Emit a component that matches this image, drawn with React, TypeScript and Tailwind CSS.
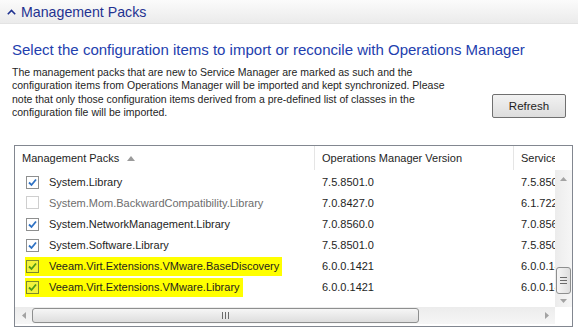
const rows = [
  { name: "System.Library", om: "7.5.8501.0", sm: "7.5.8501.0", checked: true },
  { name: "System.Mom.BackwardCompatibility.Library", om: "7.0.8427.0", sm: "6.1.7221.0", checked: false, disabled: true },
  { name: "System.NetworkManagement.Library", om: "7.0.8560.0", sm: "7.0.8560.0", checked: true },
  { name: "System.Software.Library", om: "7.5.8501.0", sm: "7.5.8501.0", checked: true },
  { name: "Veeam.Virt.Extensions.VMware.BaseDiscovery", om: "6.0.0.1421", sm: "6.0.0.1421", checked: true, hl: true },
  { name: "Veeam.Virt.Extensions.VMware.Library", om: "6.0.0.1421", sm: "6.0.0.1421", checked: true, hl: true },
];

function Checkbox({ checked, disabled, hl }: { checked: boolean; disabled?: boolean; hl?: boolean }) {
  const box = hl
    ? "border-[#7d8a2c] bg-[#f2f23c]"
    : disabled
      ? "border-[#cfcfcf] bg-white"
      : "border-[#8e8f8f] bg-white";
  return (
    <span className={`flex items-center justify-center w-[13px] h-[13px] border ${box}`}>
      {checked && (
        <svg width="9" height="9" viewBox="0 0 9 9">
          <path d="M1 4.5 L3.5 7 L8 1.5" fill="none" stroke={hl ? "#4f9a18" : "#2f72c4"} strokeWidth="1.8" />
        </svg>
      )}
    </span>
  );
}

function Tri({ dir }: { dir: "up" | "down" | "left" | "right" }) {
  const pts = {
    up: "0,4 7,4 3.5,0",
    down: "0,0 7,0 3.5,4",
    left: "4,0 4,7 0,3.5",
    right: "0,0 0,7 4,3.5",
  }[dir];
  const w = dir === "up" || dir === "down" ? 7 : 4;
  const h = dir === "up" || dir === "down" ? 4 : 7;
  return (
    <svg width={w} height={h} viewBox={`0 0 ${w} ${h}`}>
      <polygon points={pts} fill="#a3a3a3" />
    </svg>
  );
}

export default function App() {
  return (
    <div className="w-[578px] h-[331px] bg-white overflow-hidden font-['Liberation_Sans',sans-serif] text-[#1e1e1e]">
      <div className="h-6 flex items-center gap-[5px] pl-[7px] bg-gradient-to-b from-[#fbfbfb] to-[#ebebeb] border-b border-[#e3e3e3]">
        <svg width="9" height="6" viewBox="0 0 9 6" className="mt-[1px]">
          <polyline points="0.8,5.2 4.5,1.5 8.2,5.2" fill="none" stroke="#1f3291" strokeWidth="1.6" />
        </svg>
        <span className="text-[14.2px] leading-5 text-[#1f3291]">Management Packs</span>
      </div>

      <div className="pl-3 pt-4">
        <h2 className="text-[15px] leading-5 whitespace-nowrap text-[#2340ae]">
          Select the configuration items to import or reconcile with Operations Manager
        </h2>
        <div className="flex items-end mt-[6px]">
          <p className="text-[10.5px] leading-[13.3px] whitespace-nowrap">
            The management packs that are new to Service Manager are marked as such and the
            <br />
            configuration items from Operations Manager will be imported and kept synchronized. Please
            <br />
            note that only those configuration items derived from a pre-defined list of classes in the
            <br />
            configuration file will be imported.
          </p>
          <button className="ml-auto mr-3 mb-px w-[74px] h-6 rounded-[2px] border border-[#707070] bg-gradient-to-b from-[#f2f2f2] to-[#dddddd] text-[11.5px] text-[#1e1e1e]">
            Refresh
          </button>
        </div>
      </div>

      <div className="ml-[14px] mt-[26px] w-[559px] h-[182px] border border-[#828790] flex flex-col text-[11px]">
        <div className="h-6 flex shrink-0 w-[540px] overflow-hidden whitespace-nowrap">
          <div className="w-[300px] shrink-0 flex items-center gap-2 pl-[7px] border-r border-[#e5e5e5]">
            <span>Management Packs</span>
            <svg width="8" height="5" viewBox="0 0 8 5">
              <polygon points="0,5 8,5 4,0" fill="#9b9b9b" />
            </svg>
          </div>
          <div className="w-[199px] shrink-0 flex items-center pl-[7px] border-r border-[#e5e5e5]">
            Operations Manager Version
          </div>
          <div className="flex-1 flex items-center pl-[7px]">Service Manager Version</div>
        </div>

        <div className="flex flex-1 min-h-0">
          <div className="w-[540px] pt-[2px] overflow-hidden whitespace-nowrap">
            {rows.map((r) => (
              <div key={r.name} className="h-[21px] flex items-center">
                <div className="w-[300px] shrink-0 pl-[10px]">
                  <span
                    className={`inline-flex items-center h-[19px] gap-[10px] pl-px pr-[3px] ${r.hl ? "bg-[#ffff00]" : ""} ${r.disabled ? "text-[#6d6d6d]" : ""}`}
                  >
                    <Checkbox checked={r.checked} disabled={r.disabled} hl={r.hl} />
                    {r.name}
                  </span>
                </div>
                <div className="w-[199px] shrink-0 pl-[7px]">{r.om}</div>
                <div className="flex-1 pl-[7px]">{r.sm}</div>
              </div>
            ))}
          </div>
          <div className="w-[17px] flex flex-col bg-gradient-to-r from-[#ececec] to-[#f6f6f6]">
            <div className="h-[17px] flex items-center justify-center">
              <Tri dir="up" />
            </div>
            <div className="h-[80px]" />
            <div className="h-[27px] mx-px rounded-[3px] border border-[#8e8f8f] bg-gradient-to-r from-[#f6f6f6] to-[#dedede] flex flex-col items-center justify-center gap-[2px]">
              <span className="w-[7px] h-px bg-[#6a6a6a]" />
              <span className="w-[7px] h-px bg-[#6a6a6a]" />
              <span className="w-[7px] h-px bg-[#6a6a6a]" />
            </div>
            <div className="flex-1 flex items-center justify-center">
              <Tri dir="down" />
            </div>
          </div>
        </div>

        <div className="h-[17px] shrink-0 flex mb-[2px]">
          <div className="w-[540px] flex items-center bg-gradient-to-b from-[#ececec] to-[#f6f6f6]">
            <div className="w-[17px] flex justify-center">
              <Tri dir="left" />
            </div>
            <div className="w-[387px] h-[15px] rounded-[3px] border border-[#8e8f8f] bg-gradient-to-b from-[#f6f6f6] to-[#dedede] flex items-center justify-center gap-[2px]">
              <span className="w-px h-[7px] bg-[#6a6a6a]" />
              <span className="w-px h-[7px] bg-[#6a6a6a]" />
              <span className="w-px h-[7px] bg-[#6a6a6a]" />
            </div>
            <div className="flex-1" />
            <div className="w-[17px] flex justify-center">
              <Tri dir="right" />
            </div>
          </div>
          <div className="w-[17px] bg-white" />
        </div>
      </div>
    </div>
  );
}
